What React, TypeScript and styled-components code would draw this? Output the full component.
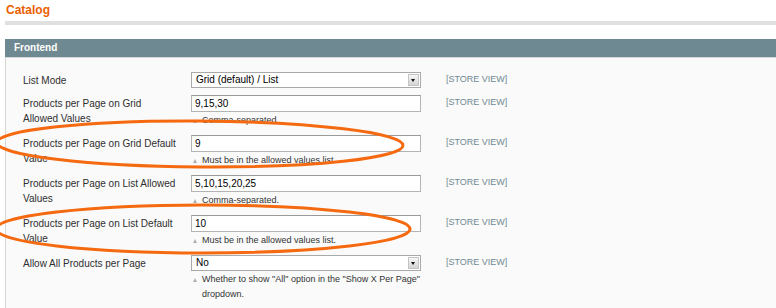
import styled, { createGlobalStyle } from "styled-components";

const GlobalStyle = createGlobalStyle`
  html, body {
    margin: 0;
    padding: 0;
    background: #ffffff;
  }
  body {
    font-family: "Liberation Sans", Arial, sans-serif;
    color: #2f2f2f;
  }
`;

const Page = styled.div`
  position: relative;
  height: 308px;
  overflow: hidden;
  padding-left: 5px;
`;

const Title = styled.h3`
  margin: 0;
  padding: 3px 1px 3px;
  font-size: 12px;
  line-height: 15px;
  font-weight: bold;
  color: #eb5e00;
  border-bottom: 4px solid #e0e0e0;
`;

const Fieldset = styled.section`
  margin-top: 14px;
`;

const PanelHead = styled.div`
  height: 18px;
  line-height: 18px;
  padding-left: 9px;
  background: #6f8992;
  color: #ffffff;
  font-size: 10px;
  font-weight: bold;
  border-bottom: 1px solid #d6d6d6;
`;

const PanelBody = styled.div`
  background: #fafafa;
  border-left: 1px solid #d6d6d6;
  padding: 11px 0 20px 17px;
  min-height: 240px;
`;

const FormRow = styled.div`
  display: grid;
  grid-template-columns: 168px 230px auto;
  align-items: start;
  padding: 3px 0 4px;
`;

const Label = styled.label`
  padding: 1px 13px 0 0;
  font-size: 10px;
  line-height: 15px;
  color: #2f2f2f;
`;

const Value = styled.div`
  display: flex;
  flex-direction: column;
`;

const TextInput = styled.input`
  box-sizing: border-box;
  width: 230px;
  height: 17px;
  margin: 0;
  padding: 0 3px;
  border: 1px solid #b4b4b4;
  border-top-color: #9a9a9a;
  background: #ffffff;
  font-family: "Liberation Sans", Arial, sans-serif;
  font-size: 10px;
  color: #000;
  outline: none;
`;

const SelectBox = styled.div`
  box-sizing: border-box;
  display: flex;
  align-items: center;
  width: 230px;
  height: 16px;
  border: 1px solid #a9a9a9;
  background: #ffffff;
  font-size: 10px;
  color: #000;
`;

const SelectText = styled.span`
  flex: 1;
  padding-left: 4px;
  line-height: 14px;
`;

const SelectArrow = styled.span`
  position: relative;
  width: 11px;
  height: 12px;
  margin-right: 1px;
  background: linear-gradient(#f7f7f7, #d4d4d4);
  border: 1px solid #c4c4c4;
  box-sizing: border-box;

  &::after {
    content: "";
    position: absolute;
    left: 2px;
    top: 4px;
    border-left: 2.5px solid transparent;
    border-right: 2.5px solid transparent;
    border-top: 3px solid #111;
  }
`;

const Note = styled.p`
  position: relative;
  margin: 1px 0 0;
  padding-left: 11px;
  font-size: 9px;
  line-height: 15px;
  color: #333;

  &::before {
    content: "";
    position: absolute;
    left: 2px;
    top: 6px;
    border-left: 2.5px solid transparent;
    border-right: 2.5px solid transparent;
    border-bottom: 4px solid #b0b0b0;
  }
`;

const Scope = styled.span`
  margin-left: 25px;
  font-size: 9px;
  line-height: 14px;
  color: #6f8992;
`;

const Marks = styled.svg`
  position: absolute;
  left: 0;
  top: 0;
  pointer-events: none;
`;

type Field = {
  label: string;
  value: string;
  select?: boolean;
  note?: string;
};

const fields: Field[] = [
  { label: "List Mode", value: "Grid (default) / List", select: true },
  { label: "Products per Page on Grid Allowed Values", value: "9,15,30", note: "Comma-separated." },
  { label: "Products per Page on Grid Default Value", value: "9", note: "Must be in the allowed values list." },
  { label: "Products per Page on List Allowed Values", value: "5,10,15,20,25", note: "Comma-separated." },
  { label: "Products per Page on List Default Value", value: "10", note: "Must be in the allowed values list." },
  {
    label: "Allow All Products per Page",
    value: "No",
    select: true,
    note: 'Whether to show "All" option in the "Show X Per Page" dropdown.',
  },
];

export default function App() {
  return (
    <>
      <GlobalStyle />
      <Page>
        <Title>Catalog</Title>
        <Fieldset>
          <PanelHead>Frontend</PanelHead>
          <PanelBody>
            {fields.map((f) => (
              <FormRow key={f.label}>
                <Label>{f.label}</Label>
                <Value>
                  {f.select ? (
                    <SelectBox>
                      <SelectText>{f.value}</SelectText>
                      <SelectArrow />
                    </SelectBox>
                  ) : (
                    <TextInput defaultValue={f.value} />
                  )}
                  {f.note && <Note>{f.note}</Note>}
                </Value>
                <Scope>[STORE VIEW]</Scope>
              </FormRow>
            ))}
          </PanelBody>
        </Fieldset>
        <Marks width="776" height="308" viewBox="0 0 776 308">
          <ellipse cx="200" cy="144" rx="203" ry="23" fill="none" stroke="#f56a10" strokeWidth="3" transform="rotate(0.4 200 144)" />
          <ellipse cx="203" cy="229" rx="207" ry="24" fill="none" stroke="#f56a10" strokeWidth="3" />
        </Marks>
      </Page>
    </>
  );
}
